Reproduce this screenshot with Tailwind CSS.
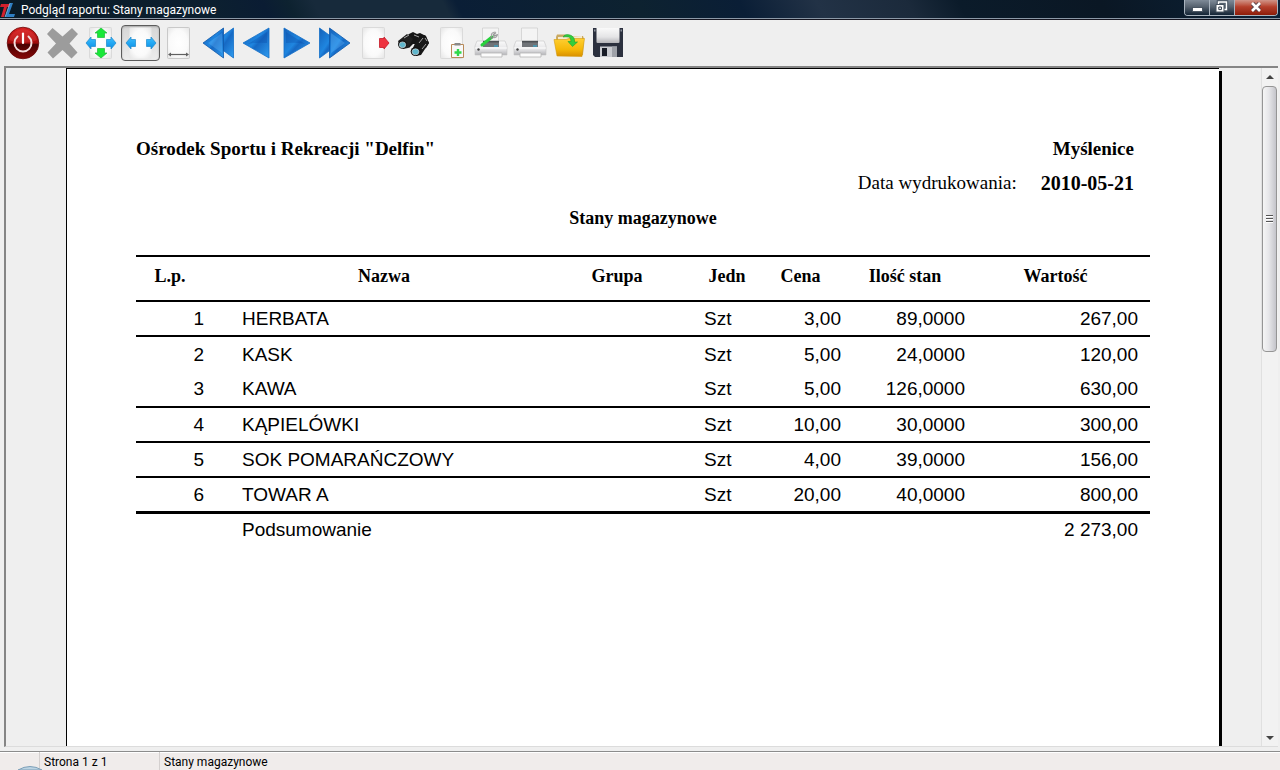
<!DOCTYPE html>
<html lang="pl">
<head>
<meta charset="utf-8">
<meta name="viewport" content="width=device-width, initial-scale=1">
<title>Podgląd raportu: Stany magazynowe</title>
<script src="https://cdn.jsdelivr.net/npm/@tailwindcss/browser@4"></script>
</head>
<body class="flex h-screen flex-col overflow-hidden bg-[#efefef] font-[Roboto,sans-serif] text-xs text-black">

<svg class="absolute h-0 w-0" aria-hidden="true">
  <defs>
    <linearGradient id="blue" x1="0" y1="0" x2="1" y2="1">
      <stop offset="0" stop-color="#1560b8"/><stop offset=".45" stop-color="#1f86e0"/><stop offset=".55" stop-color="#1669c4"/><stop offset="1" stop-color="#2f9df0"/>
    </linearGradient>
    <linearGradient id="sky" x1="0" y1="0" x2="0" y2="1"><stop offset="0" stop-color="#3cc0ff"/><stop offset="1" stop-color="#0a8fe6"/></linearGradient>
    <radialGradient id="sheet" r=".75"><stop offset="0" stop-color="#ffffff"/><stop offset=".55" stop-color="#fafafa"/><stop offset="1" stop-color="#e0e0e0"/></radialGradient>
    <linearGradient id="red" x1="0" y1="0" x2="0" y2="1"><stop offset="0" stop-color="#d82020"/><stop offset=".5" stop-color="#a00a0a"/><stop offset=".55" stop-color="#4a0202"/><stop offset="1" stop-color="#8a0808"/></linearGradient>
    <linearGradient id="silver" x1="0" y1="0" x2="0" y2="1"><stop offset="0" stop-color="#fafafa"/><stop offset=".6" stop-color="#e4e4e6"/><stop offset="1" stop-color="#b4b4b8"/></linearGradient>
    <linearGradient id="gold" x1="0" y1="0" x2="0" y2="1"><stop offset="0" stop-color="#ffcf33"/><stop offset=".6" stop-color="#f5b808"/><stop offset="1" stop-color="#d98f00"/></linearGradient>
    <symbol id="printer" viewBox="0 0 39 36">
      <path d="M5 16h28l2 5v9H3v-9z" fill="url(#silver)" stroke="#c2c2c4" stroke-width=".6"/>
      <path d="M11 15.500h16v6.500H11z" fill="#707478"/><path d="M11 15.500h16v2H11z" fill="#4c5054"/>
      <path d="M22 21h4" stroke="#35a8d0" stroke-width="1.200"/>
      <path d="M10.500 3h16v12.500h-16z" fill="#f4f4f4" stroke="#cfcfcf" stroke-width=".8"/>
      <path d="M3 23h32" stroke="#fff" stroke-width="1"/>
      <circle cx="6.500" cy="24.500" r="1.200" fill="#444"/>
      <path d="M9 28h21v4H9z" fill="#fcfcfc" stroke="#b4b4b4" stroke-width=".8"/>
    </symbol>
  </defs>
</svg>

<header class="flex h-5 shrink-0 items-stretch justify-between border-b border-[#14141f] bg-[linear-gradient(62deg,#0a1a26_0%,#0c2030_17%,#0a1c33_21%,#0d2230_23%,#172a3b_25%,#172a3b_35%,#0a1e36_36%,#0d2230_50%,#0a1e36_58%,#223246_64%,#1b2a3b_71%,#0b1b2a_75%,#0a1724_86%,#0c2238_100%)] shadow-[inset_0_-1px_0_#8b98a6]">
  <div class="flex items-center gap-[5px]">
    <svg class="h-4 w-4" viewBox="0 0 16 16" aria-hidden="true">
      <path d="M1 2h9l-1 3H7L4 15H1L4 5H0z" fill="#d3202c"/><path d="M10 1h3L9 12h6l-1 3H5z" fill="#2f7fc4"/><path d="M10 1L5 15" stroke="#bfe0f5" stroke-width=".6"/>
    </svg>
    <h1 class="text-xs text-white">Podgląd raportu: Stany magazynowe</h1>
  </div>
  <div class="mr-0.5 flex h-4 overflow-hidden rounded-b border border-t-0 border-[#a9b4bf]">
    <button type="button" aria-label="Minimalizuj" class="flex w-[25px] items-center justify-center border-r border-[#a9b4bf] bg-linear-to-b from-[#7f8b98] via-[#56626f] via-45% to-[#142536]">
      <svg class="h-4 w-6" viewBox="0 0 24 16"><rect x="7.500" y="7.500" width="10" height="4" fill="#fff" stroke="#4a5663"/></svg>
    </button>
    <button type="button" aria-label="Przywróć" class="flex w-[25px] items-center justify-center border-r border-[#a9b4bf] bg-linear-to-b from-[#7f8b98] via-[#56626f] via-45% to-[#142536]">
      <svg class="h-4 w-6" viewBox="0 0 24 16"><path d="M8.500 2h8v7.500h-8z" fill="none" stroke="#46525f" stroke-width="3.500"/><path d="M8.500 2h8v7.500h-8z" fill="#56626f" stroke="#fff" stroke-width="1.400"/><path d="M6 4.500h8v7.500H6z" fill="#fff" stroke="#46525f"/><path d="M8.800 7h2.600v2.600H8.800z" fill="#fff" stroke="#2f3b48"/></svg>
    </button>
    <button type="button" aria-label="Zamknij" class="flex w-[42px] items-center justify-center bg-linear-to-b from-[#d09488] via-[#b5402c] via-45% to-[#8d1c08]">
      <svg class="h-4 w-6" viewBox="0 0 24 16"><path d="M8.500 3.500l7 7m0-7l-7 7" stroke="#51404a" stroke-width="4.500"/><path d="M8 3l8 8m0-8l-8 8" stroke="#fff" stroke-width="2.600"/></svg>
    </button>
  </div>
</header>

<nav aria-label="Pasek narzędzi" class="flex shrink-0 px-1 py-[5px]">
  <button type="button" aria-label="Zamknij podgląd" class="h-9 w-[39px]">
    <svg viewBox="0 0 39 36"><circle cx="19" cy="18" r="15.800" fill="url(#red)" stroke="#6a0a0a" stroke-width=".8"/><path d="M5 15a14.500 14.500 0 0 1 28 0q-14 6-28 0z" fill="#ee5050" opacity=".3"/><path d="M13.500 11.500a8.500 8.500 0 1 0 11 0" fill="none" stroke="#f3dede" stroke-width="2" stroke-linecap="round"/><path d="M19 8.500V18" stroke="#fff" stroke-width="2.200" stroke-linecap="round"/></svg>
  </button>
  <button type="button" aria-label="Przerwij" class="h-9 w-[39px]">
    <svg viewBox="0 0 39 36"><path d="M9.500 3l10 8.500L29 3l6 6-8.500 9.500L34.500 27.500l-6 6-9-8.500-9.500 8.500-5.500-6L13 18.500 4 9z" fill="#9c9c9c"/></svg>
  </button>
  <button type="button" aria-label="Cała strona" class="h-9 w-[39px]">
    <svg viewBox="0 0 39 36"><rect x="7.500" y="2.500" width="22" height="31" rx="1" fill="url(#sheet)" stroke="#dadada"/><path d="M19 3l6 5h-2.500v4.500h-7V8H13zM19 33l6-5h-2.500v-4.500h-7V28H13z" fill="#18e838" stroke="#1fb83a" stroke-width=".7"/><path d="M4 18l5-6v2.500h4.500v7H9V24zM34 18l-5-6v2.500h-4.500v7H29V24z" fill="url(#sky)" stroke="#1c88cc" stroke-width=".7"/></svg>
  </button>
  <button type="button" aria-label="Szerokość strony" aria-pressed="true" class="h-9 w-[39px] rounded border border-[#5c5c5c] bg-linear-to-b from-[#d6d6d6] to-[#ececec] shadow-[inset_0_1px_2px_#a8a8a8]">
    <svg viewBox="1 1 37 34"><rect x="8.500" y="2.500" width="22" height="31" rx="1" fill="url(#sheet)"/><path d="M5 18l5-6v2.500h4.500v7H10V24zM35 18l-5-6v2.500h-4.500v7H30V24z" fill="url(#sky)" stroke="#1c88cc" stroke-width=".7"/></svg>
  </button>
  <button type="button" aria-label="Skala 100%" class="h-9 w-[39px]">
    <svg viewBox="0 0 39 36"><rect x="7.500" y="2.500" width="22" height="31" rx="1" fill="url(#sheet)" stroke="#c9c9c9"/><path d="M9.500 29.500h18" stroke="#606060" stroke-width="1.200"/><path d="M8 29.500l3-2v4zM29 29.500l-3-2v4z" fill="#606060"/></svg>
  </button>
  <button type="button" aria-label="Pierwsza strona" class="h-9 w-[39px]">
    <svg viewBox="0 0 39 36"><g fill="url(#blue)" stroke="#1470c8" stroke-width=".8"><path d="M34.500 3v30L14 18z"/><path d="M24.500 3v30L4 18z" stroke="#0e57a8"/></g><path d="M23 8v20L9 18z" fill="#6fc0ff" opacity=".3"/></svg>
  </button>
  <button type="button" aria-label="Poprzednia strona" class="h-9 w-[39px]">
    <svg viewBox="0 0 39 36"><path d="M31 3v30L5 18z" fill="url(#blue)" stroke="#1470c8" stroke-width=".8"/><path d="M29 7v11q-10-1-19 1z" fill="#0b4ea8" opacity=".35"/></svg>
  </button>
  <button type="button" aria-label="Następna strona" class="h-9 w-[39px]">
    <svg viewBox="0 0 39 36"><path d="M7 3v30l26-15z" fill="url(#blue)" stroke="#1470c8" stroke-width=".8"/><path d="M9 7v11q10-1 19 1z" fill="#0b4ea8" opacity=".35"/></svg>
  </button>
  <button type="button" aria-label="Ostatnia strona" class="h-9 w-[39px]">
    <svg viewBox="0 0 39 36"><g fill="url(#blue)" stroke="#1470c8" stroke-width=".8"><path d="M3.500 3v30L24 18z"/><path d="M13.500 3v30L34 18z" stroke="#0e57a8"/></g><path d="M15 8v20l14-10z" fill="#6fc0ff" opacity=".3"/></svg>
  </button>
  <button type="button" aria-label="Idź do strony" class="h-9 w-[39px]">
    <svg viewBox="0 0 39 36"><rect x="7.500" y="2.500" width="22" height="31" rx="1" fill="url(#sheet)" stroke="#dadada"/><path d="M24.500 13.500H29V12l5 6-5 6v-1.500h-4.500z" fill="#ee3340" stroke="#c41826" stroke-width=".8"/></svg>
  </button>
  <button type="button" aria-label="Szukaj" class="h-9 w-[39px]">
    <svg viewBox="0 0 39 36"><path d="M4 17L15 9l4-2 4 2 3-1 6 3 3 7-3 5-5 1-3-5-5 0-4 4z" fill="#161616"/><path d="M4 16l9-7 6 5-5 9-5 1z" fill="#202020"/><path d="M18 25l5-11 8-4 4 8-8 12-5 1z" fill="#181818"/><ellipse cx="8.500" cy="19.500" rx="4.500" ry="4.200" fill="#111"/><ellipse cx="8.500" cy="19.800" rx="3.200" ry="2.900" fill="#5fb6cc" stroke="#cdd6d8" stroke-width=".7"/><ellipse cx="21.500" cy="26.500" rx="4.800" ry="4.500" fill="#111"/><ellipse cx="21.500" cy="26.800" rx="3.400" ry="3" fill="#5fb6cc" stroke="#cdd6d8" stroke-width=".7"/><path d="M10 13l5-3M25 18l4-5M20 10l5 2M28 24l4-5M31 13l2 3" stroke="#a4a4a4" stroke-width="1"/></svg>
  </button>
  <button type="button" aria-label="Dodaj stronę" class="h-9 w-[39px]">
    <svg viewBox="0 0 39 36"><rect x="7.500" y="2.500" width="22" height="31" rx="1" fill="url(#sheet)" stroke="#dadada"/><path d="M18.500 19.500h12v13h-12z" fill="#f8f8f8" stroke="#b98a58"/><path d="M21.500 18h6v2.500h-6z" fill="#8a8a8a"/><path d="M25 24v7m-3.500-3.500h7" stroke="#2fd84a" stroke-width="2.400"/></svg>
  </button>
  <button type="button" aria-label="Ustawienia wydruku" class="h-9 w-[39px]">
    <svg viewBox="0 0 39 36"><use href="#printer"/><path d="M10 20l10-8" stroke="#27d23c" stroke-width="3" stroke-linecap="round"/><path d="M18.500 13l2-1" stroke="#888" stroke-width="2"/><path d="M24 7.500l-2.500 2 .5 1.500 3-1" fill="none" stroke="#9a9a9a" stroke-width="1.600"/><path d="M19.500 11.500q-1-4 4-4.500M21 12.500q4 1 4.500-3.500" fill="none" stroke="#a4a4a4" stroke-width="1.200"/></svg>
  </button>
  <button type="button" aria-label="Drukuj" class="h-9 w-[39px]">
    <svg viewBox="0 0 39 36"><use href="#printer"/></svg>
  </button>
  <button type="button" aria-label="Otwórz" class="h-9 w-[39px]">
    <svg viewBox="0 0 39 36"><path d="M6 12l1-2.500h8l2 1.500h16l1 3-1 16H7z" fill="#c9a860"/><path d="M8 12l24-1v6H8z" fill="#f4ead0"/><path d="M4 14.500h12l3-1h15.500L32 31.500 7 31z" fill="url(#gold)" stroke="#d39a10" stroke-width=".6"/><path d="M13 12q2-3.500 7-2t4.500 7h3L22.500 21.500 18 16.500h3q0-4-2.500-4.500t-5.500 0z" fill="#31cf3c" stroke="#1e9f2a" stroke-width=".6"/></svg>
  </button>
  <button type="button" aria-label="Zapisz" class="h-9 w-[39px]">
    <svg viewBox="0 0 39 36"><path d="M4 3h30v29H6l-2-2z" fill="#2b303e"/><path d="M7.500 3h23v14q0 1-1 1h-21q-1 0-1-1z" fill="url(#silver)"/><path d="M5 4.500h1.500v2H5zM31.500 4.500H33v2h-1.500z" fill="#8c919c"/><path d="M11 21.500h17V32H11z" fill="#c9cbd0"/><path d="M13 23h5v8h-5z" fill="#171b26"/><path d="M23 21.500h5V32h-5z" fill="#9ea1a8"/></svg>
  </button>
</nav>

<main class="ml-1 mr-0.5 flex min-h-0 flex-1 border-t-2 border-l-2 border-b border-t-[#858585] border-l-[#858585] border-b-[#dcdcdc]">
  <div class="flex min-w-0 flex-1 overflow-hidden pl-[60px] pr-[42px]">
    <article class="min-w-0 flex-1 border-t border-l border-black bg-white px-[69px] pt-[70px] shadow-[3px_3px_0_#000]">
      <div class="flex flex-col gap-[14px] pr-4 font-['Liberation_Serif',serif] text-[19px]/5 font-bold">
        <div class="flex justify-between"><p>Ośrodek Sportu i Rekreacji "Delfin"</p><p>Myślenice</p></div>
        <div class="flex justify-end gap-6"><p class="font-normal">Data wydrukowania:</p><p class="text-xl/5">2010-05-21</p></div>
      </div>
      <h2 class="mt-[15px] mb-[27px] text-center font-['Liberation_Serif',serif] text-lg/5 font-bold">Stany magazynowe</h2>
      <table class="w-full table-fixed border-separate border-spacing-0 font-['Liberation_Sans',sans-serif] text-[19px]/5">
        <colgroup><col class="w-[68px]"><col><col class="w-[106px]"><col class="w-[90px]"><col class="w-[81px]"><col class="w-[124px]"><col class="w-[185px]"></colgroup>
        <thead class="font-['Liberation_Serif',serif] text-lg/5 [&_th]:h-[47px] [&_th]:border-y-2 [&_th]:pb-[6px]">
          <tr><th scope="col">L.p.</th><th scope="col">Nazwa</th><th scope="col">Grupa</th><th scope="col" class="pl-6">Jedn</th><th scope="col">Cena</th><th scope="col" class="pl-1">Ilość stan</th><th scope="col" class="pr-1">Wartość</th></tr>
        </thead>
        <tbody class="text-right [&_td:nth-child(2)]:pl-[38px] [&_td:nth-child(2)]:text-left [&_td:nth-child(4)]:pl-[34px] [&_td:nth-child(4)]:text-left [&_td:last-child]:pr-3">
          <tr class="h-[35px] [&_td]:border-b-2"><td>1</td><td>HERBATA</td><td></td><td>Szt</td><td>3,00</td><td>89,0000</td><td>267,00</td></tr>
          <tr class="h-[35px]"><td>2</td><td>KASK</td><td></td><td>Szt</td><td>5,00</td><td>24,0000</td><td>120,00</td></tr>
          <tr class="h-9 [&_td]:border-b-2"><td>3</td><td>KAWA</td><td></td><td>Szt</td><td>5,00</td><td>126,0000</td><td>630,00</td></tr>
          <tr class="h-[35px] [&_td]:border-b-2"><td>4</td><td>KĄPIELÓWKI</td><td></td><td>Szt</td><td>10,00</td><td>30,0000</td><td>300,00</td></tr>
          <tr class="h-[35px] [&_td]:border-b-2"><td>5</td><td>SOK POMARAŃCZOWY</td><td></td><td>Szt</td><td>4,00</td><td>39,0000</td><td>156,00</td></tr>
          <tr class="h-9 [&_td]:border-b-3"><td>6</td><td>TOWAR A</td><td></td><td>Szt</td><td>20,00</td><td>40,0000</td><td>800,00</td></tr>
          <tr class="h-8"><td></td><td>Podsumowanie</td><td></td><td></td><td></td><td></td><td>2 273,00</td></tr>
        </tbody>
      </table>
    </article>
  </div>
  <div class="flex w-[17px] shrink-0 flex-col items-center border-l border-[#e0e0e0] bg-[#f2f2f2] pr-px">
    <button type="button" aria-label="Przewiń w górę" class="flex h-[18px] w-full items-center justify-center"><svg class="h-1 w-2" viewBox="0 0 8 4"><path d="M0 4l4-4 4 4z" fill="#444"/></svg></button>
    <button type="button" aria-label="Suwak" class="flex h-[266px] w-[15px] items-center justify-center rounded-sm border border-[#959595] bg-linear-to-r from-[#f5f5f5] via-[#e6e6e9] via-45% to-[#c4c4ca]"><svg class="h-2 w-2" viewBox="0 0 8 8"><path d="M0 .5h7M0 3.500h7M0 6.500h7" stroke="#555"/><path d="M0 1.500h7M0 4.500h7M0 7.500h7" stroke="#fff"/></svg></button>
    <button type="button" aria-label="Przewiń w dół" class="mt-auto flex h-[17px] w-full items-center justify-center"><svg class="h-1 w-2" viewBox="0 0 8 4"><path d="M0 0l4 4 4-4z" fill="#444"/></svg></button>
  </div>
</main>

<footer class="mt-1 flex h-[19px] shrink-0 items-stretch overflow-hidden border-t border-[#8c8c8c] bg-[#f0eceb] text-xs/5 shadow-[inset_0_1px_0_#fff]">
  <div class="flex w-10 items-end justify-center border-r border-[#d4d0cf] pl-5">
    <svg class="h-1 w-6 shrink-0" viewBox="0 0 24 4" aria-hidden="true"><path d="M0 4Q12-3 24 4z" fill="#bcd3e2" stroke="#7c9fb8"/></svg>
  </div>
  <p class="w-[120px] border-r border-[#d4d0cf] pl-1">Strona 1 z 1</p>
  <p class="pl-1">Stany magazynowe</p>
</footer>
</body>
</html>
